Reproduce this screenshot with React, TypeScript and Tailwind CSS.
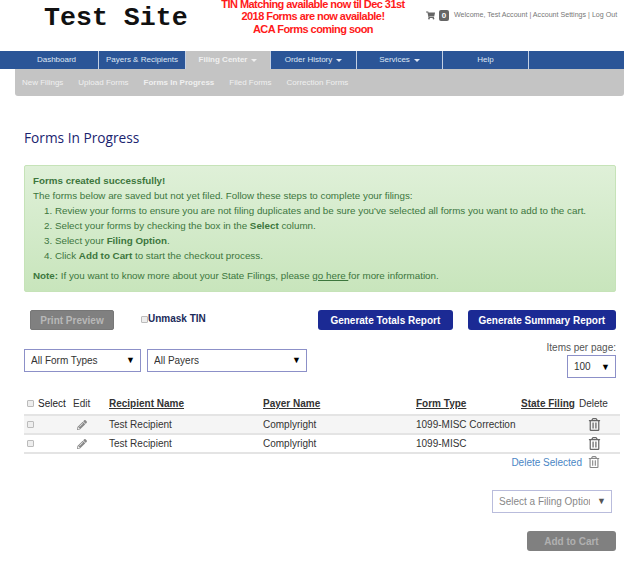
import React from "react";
import { FaPencilAlt, FaRegTrashAlt, FaShoppingCart } from "react-icons/fa";

const Caret = () => <span className="ml-[4px] inline-block h-0 w-0 border-x-[3px] border-t-[3px] border-x-transparent border-t-current align-middle" />;

const nav = [
  { label: "Dashboard", w: "w-[84px]" },
  { label: "Payers & Recipients", w: "w-[87px]" },
  { label: "Filing Center", w: "w-[85px]", active: true, caret: true },
  { label: "Order History", w: "w-[86px]", caret: true },
  { label: "Services", w: "w-[86px]", caret: true },
  { label: "Help", w: "w-[86px]" },
];

const rows = ["1099-MISC Correction", "1099-MISC"];

const Select = ({ label, className, arrow = "text-black", text = "text-[#333]" }: { label: string; className: string; arrow?: string; text?: string }) => (
  <div className={`flex items-center justify-between border border-[#8c90c8] bg-white text-[10px] ${text} ${className}`}>
    <span className="min-w-0 overflow-hidden whitespace-nowrap">{label}</span>
    <span className={`shrink-0 text-[9px] ${arrow}`}>▼</span>
  </div>
);

const Box = () => <span className="inline-block h-[7px] w-[7px] rounded-[1px] border border-[#bbb] bg-[#eee]" />;

export default function App() {
  return (
    <div className="h-[561px] w-[624px] overflow-hidden bg-white font-['Liberation_Sans',Arial,sans-serif] text-[#333]">
      <header className="flex h-[51px] items-start">
        <div className="ml-[44px] w-[177px] shrink-0 whitespace-nowrap font-['Liberation_Mono',monospace] text-[26.6px] font-bold leading-[37px] text-[#111]">Test Site</div>
        <div className="w-[184px] shrink-0 text-center text-[11px] font-bold leading-[12.5px] tracking-[-0.55px] text-[#ff1a1a] [&>div]:whitespace-nowrap">
          <div className="leading-[9px]">TIN Matching available now til Dec 31st</div>
          <div className="mt-[1px]">2018 Forms are now available!</div>
          <div>ACA Forms coming soon</div>
        </div>
        <div className="ml-[21px] mt-[10px] flex shrink-0 items-center whitespace-nowrap text-[7.1px] text-[#777]">
          <FaShoppingCart className="h-[9px] w-[9px] text-[#666]" />
          <span className="ml-[4px] mr-[5px] flex h-[11px] w-[10px] items-center justify-center rounded-[2px] bg-[#666] text-[8px] font-bold text-white">0</span>
          <span>Welcome, Test Account | Account Settings | Log Out</span>
        </div>
      </header>

      <nav className="flex h-[18px] bg-[#2b5597] pl-[15px] text-[8px] leading-[18px] text-[#dfe7f5]">
        {nav.map((n) => (
          <div key={n.label} className={`${n.w} flex items-center justify-center whitespace-nowrap border-r border-[#c4d0e4] ${n.active ? "bg-[#c4c4c4] font-bold text-[#f0f0f0]" : ""}`}>
            {n.label}
            {n.caret && <Caret />}
          </div>
        ))}
      </nav>

      <div className="ml-[15px] flex h-[27px] items-center gap-[15px] rounded-b-[3px] bg-[#c4c4c4] pl-[7px] text-[8px] text-[#f0f0f0]">
        <span>New Filings</span>
        <span>Upload Forms</span>
        <span className="font-bold">Forms In Progress</span>
        <span>Filed Forms</span>
        <span>Correction Forms</span>
      </div>

      <h1 className="ml-[24px] mt-[32px] font-['Open_Sans',sans-serif] text-[13.7px] leading-[20px] text-[#1a2470]">Forms In Progress</h1>

      <section className="ml-[24px] mr-[8px] mt-[17px] h-[127px] rounded-[2px] border border-[#c6e3b8] bg-gradient-to-b from-[#dff0d8] to-[#c8e5bc] pl-[8px] pt-[7px] text-[9.8px] leading-[15px] text-[#3c763d]">
        <div className="font-bold">Forms created successfully!</div>
        <div>The forms below are saved but not yet filed. Follow these steps to complete your filings:</div>
        <ol className="ml-[11px] list-inside list-decimal">
          <li>Review your forms to ensure you are not filing duplicates and be sure you've selected all forms you want to add to the cart.</li>
          <li>Select your forms by checking the box in the <b>Select</b> column.</li>
          <li>Select your <b>Filing Option</b>.</li>
          <li>Click <b>Add to Cart</b> to start the checkout process.</li>
        </ol>
        <div className="mt-[5px]"><b>Note:</b> If you want to know more about your State Filings, please <u>go here </u>for more information.</div>
      </section>

      <div className="mt-[18px] flex items-start pl-[30px]">
        <div className="flex h-[20px] w-[84px] items-center justify-center rounded-[2px] border border-[#777] bg-[#808080] text-[10px] font-bold text-[#b8b8b8]">Print Preview</div>
        <div className="ml-[27px] flex items-center text-[10px] font-bold leading-[18px] text-[#1a2a5a]"><Box />Unmask TIN</div>
        <div className="ml-[112px] flex h-[20px] w-[135px] items-center justify-center rounded-[3px] bg-[#1b2a94] text-[10px] font-bold text-white">Generate Totals Report</div>
        <div className="ml-[15px] flex h-[20px] w-[148px] items-center justify-center rounded-[3px] bg-[#1b2a94] text-[10px] font-bold text-white">Generate Summary Report</div>
      </div>

      <div className="mr-[8px] mt-[11px] flex items-start pl-[24px]">
        <Select label="All Form Types" className="mt-[8px] h-[23px] w-[117px] pl-[6px] pr-[5px]" />
        <Select label="All Payers" className="ml-[6px] mt-[8px] h-[23px] w-[160px] pl-[6px] pr-[5px]" />
        <div className="ml-auto flex flex-col items-end text-[10px] leading-[14px] text-[#555]">
          <span>Items per page:</span>
          <Select label="100" className="h-[23px] w-[49px] pl-[6px] pr-[5px]" />
        </div>
      </div>

      <table className="ml-[24px] mt-[19px] w-[596px] table-fixed border-collapse text-[10px]">
        <thead>
          <tr className="h-[18px] leading-[14px] [&>th]:align-top">
            <th className="w-[49px] whitespace-nowrap text-left font-normal"><span className="ml-[3px] mr-[4px]"><Box /></span><span className="text-[#222]">Select</span></th>
            <th className="w-[36px] text-left font-normal">Edit</th>
            <th className="w-[154px] text-left font-bold underline">Recipient Name</th>
            <th className="w-[153px] text-left font-bold underline">Payer Name</th>
            <th className="w-[105px] text-left font-bold underline">Form Type</th>
            <th className="w-[58px] whitespace-nowrap text-left font-bold underline">State Filing</th>
            <th className="text-left font-normal">Delete</th>
          </tr>
        </thead>
        <tbody>
          {rows.map((r, i) => (
            <tr key={r} className={`h-[19px] border-y-2 border-[#e4e4e4] ${i === 0 ? "bg-[#f5f5f5]" : ""}`}>
              <td><span className="ml-[3px]"><Box /></span></td>
              <td><FaPencilAlt className="ml-[4px] h-[10px] w-[10px] text-[#888]" /></td>
              <td>Test Recipient</td>
              <td>Complyright</td>
              <td className="whitespace-nowrap" colSpan={2}>{r}</td>
              <td><FaRegTrashAlt className="ml-[9px] h-[13px] w-[13px] text-[#666]" /></td>
            </tr>
          ))}
        </tbody>
      </table>

      <div className="flex h-[16px] items-center justify-end pr-[24px] text-[10px] text-[#4a86c5]">
        Delete Selected
        <FaRegTrashAlt className="ml-[6px] h-[12px] w-[12px] text-[#888]" />
      </div>

      <div className="mt-[20px] flex justify-end pr-[12px]">
        <Select label="Select a Filing Option" arrow="text-[#555] ml-[7px]" text="text-[#888]" className="h-[23px] w-[120px] border-[#b9bcdc] pl-[6px] pr-[5px]" />
      </div>

      <div className="mt-[18px] flex justify-end pr-[8px]">
        <div className="flex h-[20px] w-[89px] items-center justify-center rounded-[3px] bg-[#808080] text-[10px] font-bold text-[#b0b0b0]">Add to Cart</div>
      </div>
    </div>
  );
}
